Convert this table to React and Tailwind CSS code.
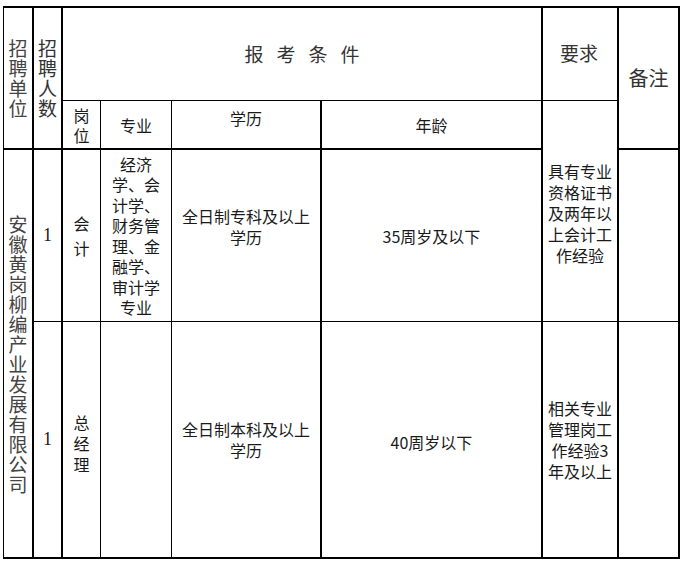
const cjk = "font-['SimSun','Noto_Sans_CJK_SC',sans-serif]";

// one line per entry, centred
const Lines = ({ items, className = "" }) => (
  <div className={"flex flex-col items-center " + className}>
    {items.map((t, i) => (
      <span key={i}>{t}</span>
    ))}
  </div>
);

const App = () => {
  return (
    <div className={"w-[683px] h-[561px] bg-white text-[#1a1a1a] " + cjk}>
      <table className="ml-[3px] mt-[6px] table-fixed border-separate border-spacing-0 border-t-2 border-l border-black">
        <colgroup>
          <col className="w-[30px]" />
          <col className="w-[29px]" />
          <col className="w-[38px]" />
          <col className="w-[71px]" />
          <col className="w-[150px]" />
          <col className="w-[221px]" />
          <col className="w-[76px]" />
          <col className="w-[61px]" />
        </colgroup>
        <tbody>
          {/* header row 1 */}
          <tr className="h-[93px]">
            <td rowSpan={2} className="border-r-2 border-b-2 border-black align-middle text-[#444]">
              <Lines items={["招", "聘", "单", "位"]} className="text-[19px] leading-[20px]" />
            </td>
            <td rowSpan={2} className="border-r-2 border-b-2 border-black align-middle text-[#333]">
              <Lines items={["招", "聘", "人", "数"]} className="text-[19px] leading-[20px]" />
            </td>
            <td colSpan={4} className="border-r-2 border-b border-black align-middle">
              <div className="flex justify-center gap-[13px] text-[19px] text-[#333]">
                <span>报</span>
                <span>考</span>
                <span>条</span>
                <span>件</span>
              </div>
            </td>
            <td className="border-r-2 border-b border-black align-middle text-center text-[19px] text-[#333] pb-[2px] pr-[2px]">
              要求
            </td>
            <td rowSpan={2} className="border-r-2 border-b-2 border-black align-middle text-center text-[20px] text-[#333]">
              备注
            </td>
          </tr>

          {/* header row 2 */}
          <tr className="h-[49px]">
            <td className="border-r border-b-2 border-black align-middle">
              <Lines items={["岗", "位"]} className="text-[16px] leading-[20px]" />
            </td>
            <td className="border-r border-b-2 border-black align-middle text-center text-[16px]">专业</td>
            <td className="border-r-2 border-b-2 border-black align-top text-center text-[16px] pt-[5px]">学历</td>
            <td className="border-r-2 border-b-2 border-black align-middle text-center text-[16px]">年龄</td>
            <td rowSpan={2} className="border-r-2 border-b border-black align-middle pt-[4px]">
              <Lines
                items={["具有专业", "资格证书", "及两年以", "上会计工", "作经验"]}
                className="text-[16px] leading-[21px]"
              />
            </td>
          </tr>

          {/* first position */}
          <tr className="h-[172px]">
            <td rowSpan={2} className="border-r-2 border-b-2 border-black align-middle text-[#444]">
              <Lines
                items={["安", "徽", "黄", "岗", "柳", "编", "产", "业", "发", "展", "有", "限", "公", "司"]}
                className="text-[19px] leading-[20px]"
              />
            </td>
            <td className="border-r-2 border-b border-black align-middle text-center text-[18px] font-['Liberation_Serif',serif]">
              1
            </td>
            <td className="border-r border-b border-black align-middle">
              <Lines items={["会", "计"]} className="text-[16px] leading-[25px]" />
            </td>
            <td className="border-r border-b border-black align-middle">
              <Lines
                items={["经济", "学、会", "计学、", "财务管", "理、金", "融学、", "审计学", "专业"]}
                className="text-[16px] leading-[20.5px]"
              />
            </td>
            <td className="border-r-2 border-b border-black align-middle pb-[18px]">
              <Lines items={["全日制专科及以上", "学历"]} className="text-[16px] leading-[21px]" />
            </td>
            <td className="border-r-2 border-b border-black align-middle text-center text-[16px]">35周岁及以下</td>
            <td className="border-r-2 border-b border-black"></td>
          </tr>

          {/* second position */}
          <tr className="h-[237px]">
            <td className="border-r-2 border-b-2 border-black align-middle text-center text-[18px] font-['Liberation_Serif',serif]">
              1
            </td>
            <td className="border-r border-b-2 border-black align-middle pt-[8px]">
              <Lines items={["总", "经", "理"]} className="text-[16px] leading-[21px]" />
            </td>
            <td className="border-r border-b-2 border-black"></td>
            <td className="border-r-2 border-b-2 border-black align-middle">
              <Lines items={["全日制本科及以上", "学历"]} className="text-[16px] leading-[21px]" />
            </td>
            <td className="border-r-2 border-b-2 border-black align-middle text-center text-[16px] pt-[4px]">40周岁以下</td>
            <td className="border-r-2 border-b-2 border-black align-middle">
              <Lines
                items={["相关专业", "管理岗工", "作经验3", "年及以上"]}
                className="text-[16px] leading-[21px]"
              />
            </td>
            <td className="border-r-2 border-b-2 border-black"></td>
          </tr>
        </tbody>
      </table>
    </div>
  );
};

export default App;
